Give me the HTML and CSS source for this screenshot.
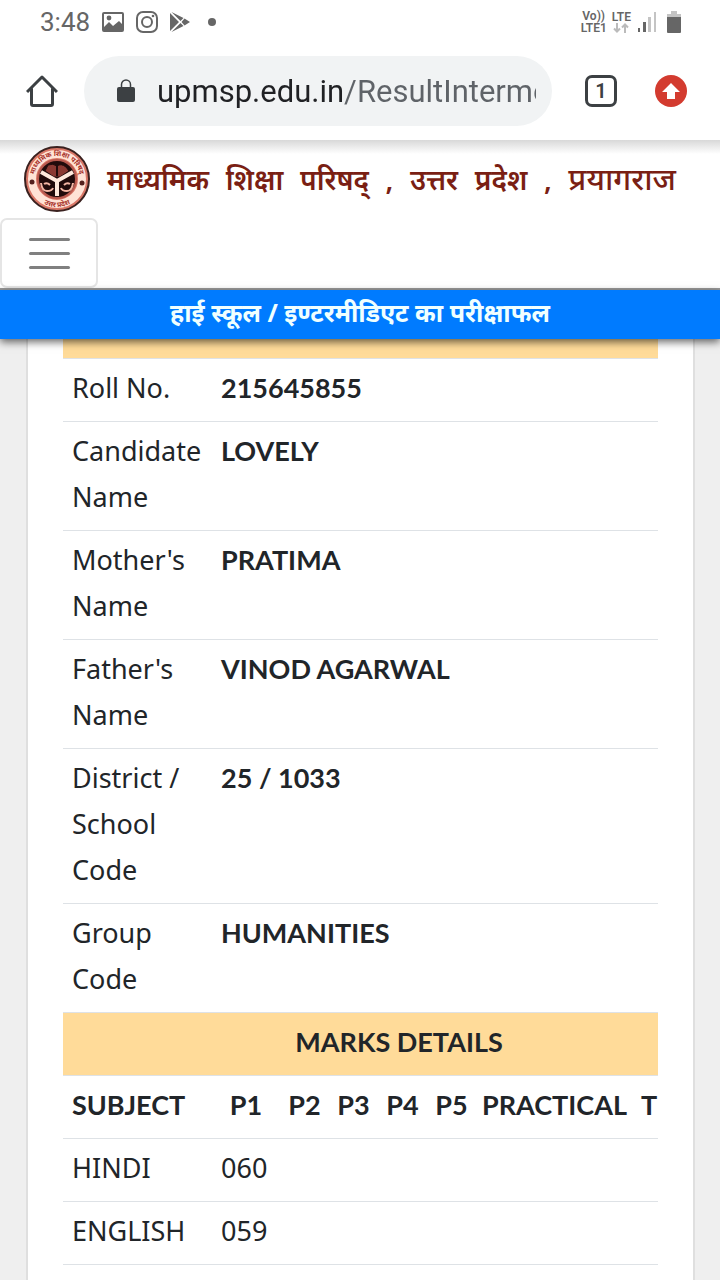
FILE: index.html
```
<!DOCTYPE html>
<html lang="hi">

<head>
    <meta charset="UTF-8">
    <meta name="viewport" content="width=device-width, initial-scale=1">
    <title>हाई स्कूल / इण्टरमीडिएट का परीक्षाफल</title>
    <link rel="stylesheet" href="styles.css">
</head>

<body>
    <div class="status">
        <span class="time">3:48</span>
        <svg class="photo" width="22" height="20" viewBox="0 0 22 20">
            <path fill="#666" fill-rule="evenodd" d="M2 0h18q2 0 2 2v16q0 2-2 2H2q-2 0-2-2V2q0-2 2-2zM2 2v13l5-5 4 4 6-5 3 3V2z" />
            <circle cx="7" cy="6" r="2.4" fill="#666" />
        </svg>
        <svg class="insta" width="22" height="22" viewBox="0 0 22 22" fill="none" stroke="#666" stroke-width="2">
            <rect x="1" y="1" width="20" height="20" rx="6" />
            <circle cx="11" cy="11" r="5" />
            <circle cx="17" cy="5" r="1.3" fill="#666" stroke="none" />
        </svg>
        <svg class="play" width="20" height="20" viewBox="0 0 20 20" fill="#666">
            <path d="M0 1l9 9-9 9zM1.500 0l12 6-3 3zM1.500 20l12-6-3-3zM14.500 6.500L20 10l-5.500 3.500L11.500 10z" />
        </svg>
        <span class="dot"></span>
        <div class="network">
            <div class="volte">Vo))<br>LTE1</div>
            <div class="lte">LTE
                <svg width="16" height="10" viewBox="0 0 16 10" fill="none" stroke="#bbb" stroke-width="2">
                    <path d="M4 0v9M1 5.500l3 3 3-3M12 10V1M9 4.500l3-3 3 3" />
                </svg>
            </div>
            <svg class="signal" width="18" height="20" viewBox="0 0 18 20">
                <path fill="#666" d="M0 16h2v4H0zM5 10h3v10H5z" />
                <path fill="#c4c4c4" d="M10 5h3v15h-3zM16 0h2v20h-2z" />
            </svg>
            <svg width="14" height="22" viewBox="0 0 14 22">
                <path fill="#c4c4c4" d="M4 0h6v3h4v4H0V3h4z" />
                <path fill="#666" d="M0 6h14v15q0 1-1 1H1q-1 0-1-1z" />
            </svg>
        </div>
    </div>

    <div class="toolbar">
        <button class="home" aria-label="Home">
            <svg width="32" height="32" viewBox="0 0 32 32" fill="none" stroke="#3c4043" stroke-width="3" stroke-linejoin="round">
                <path d="M1 17L16 2l15 15M5.500 13.500V29q0 1.500 1.500 1.500h18q1.500 0 1.500-1.500V13.500" />
            </svg>
        </button>
        <div class="address">
            <svg width="18" height="24" viewBox="0 0 18 24">
                <rect x="0" y="8" width="18" height="15" rx="2" fill="#3c4043" />
                <path d="M4.500 9V5.500a4.500 4.500 0 0 1 9 0V9" fill="none" stroke="#3c4043" stroke-width="1.500" />
            </svg>
            <input class="url" type="text" aria-label="URL" value="upmsp.edu.in/ResultIntermediate">
        </div>
        <button class="tabs">1</button>
        <button class="update" aria-label="Update">
            <svg width="32" height="32" viewBox="0 0 32 32">
                <circle cx="16" cy="16" r="16" fill="#d33b2f" />
                <path fill="#fff" d="M16 8l9 9h-5v7h-8v-7H7z" />
            </svg>
        </button>
    </div>

    <header class="site">
        <div class="brand">
            <svg class="logo" width="66" height="66" viewBox="0 0 66 66">
                <circle cx="33" cy="33" r="32" fill="#d97767" stroke="#3a211f" stroke-width="2" />
                <circle cx="33" cy="33" r="25" fill="none" stroke="#ffe3d6" stroke-width="8" />
                <!-- lettering round the rim -->
                <path id="rim-top" d="M10 33A23 23 0 0 1 56 33" fill="none" />
                <path id="rim-bottom" d="M5 33A28 28 0 0 0 61 33" fill="none" />
                <text class="rim"><textPath href="#rim-top" startOffset="50%">माध्यमिक शिक्षा परिषद्</textPath></text>
                <text class="rim"><textPath href="#rim-bottom" startOffset="50%">उत्तर प्रदेश</textPath></text>
                <circle cx="8" cy="36" r="2.500" fill="#54201d" />
                <circle cx="58" cy="37" r="2.500" fill="#54201d" />
                <circle cx="33" cy="33" r="19" fill="#210b0b" stroke="#b8594e" stroke-width="2" />
                <path d="M24 19q5-2 9 1 4-3 9 1l3 4-9 6h-6l-9-6z" fill="#8a3932" stroke="#210b0b" />
                <path d="M33 19v11" stroke="#210b0b" stroke-width="2" />
                <path d="M17 26l16 9 16-9M33 35v15" fill="none" stroke="#ffe9dc" stroke-width="4" />
                <path d="M17 37q1 8 6 8 5 0 6-3M49 37q-1 8-6 8-5 0-6-3M20 38q3-2 6 1M46 38q-3-2-6 1" fill="none" stroke="#f3b6a4" stroke-width="2" />
            </svg>
            <h1 class="name">
                <span>माध्यमिक</span> <span>शिक्षा</span> <span>परिषद्</span> <span>,</span>
                <span>उत्तर</span> <span>प्रदेश</span> <span>,</span> <span class="city">प्रयागराज</span>
            </h1>
        </div>
        <button class="menu" aria-label="Menu"><i></i><i></i><i></i></button>
    </header>
    <h2 class="title">हाई स्कूल / इण्टरमीडिएट का परीक्षाफल</h2>

    <main class="page">
        <div class="card">
            <div class="scroll">
                <table class="result">
                    <colgroup>
                        <col class="c-subject">
                        <col class="c-first">
                        <col class="c-paper" span="4">
                        <col class="c-practical">
                        <col class="c-total">
                    </colgroup>
                    <tbody>
                        <tr class="band top"><td colspan="8"></td></tr>
                        <tr><td>Roll No.</td><td colspan="7"><b>215645855</b></td></tr>
                        <tr><td>Candidate Name</td><td colspan="7"><b>LOVELY</b></td></tr>
                        <tr><td>Mother's Name</td><td colspan="7"><b>PRATIMA</b></td></tr>
                        <tr><td>Father's Name</td><td colspan="7"><b>VINOD AGARWAL</b></td></tr>
                        <tr><td>District / School Code</td><td colspan="7"><b>25 / 1033</b></td></tr>
                        <tr><td>Group Code</td><td colspan="7"><b>HUMANITIES</b></td></tr>
                        <tr class="band"><th colspan="8">MARKS DETAILS</th></tr>
                        <tr class="heads">
                            <th>SUBJECT</th>
                            <th>P1</th>
                            <th>P2</th>
                            <th>P3</th>
                            <th>P4</th>
                            <th>P5</th>
                            <th>PRACTICAL</th>
                            <th>T</th>
                        </tr>
                        <tr><td>HINDI</td><td>060</td><td colspan="6"></td></tr>
                        <tr><td>ENGLISH</td><td>059</td><td colspan="6"></td></tr>
                        <tr><td colspan="8"></td></tr>
                    </tbody>
                </table>
            </div>
        </div>
    </main>
</body>

</html>
```
FILE: styles.css
```
* {
    margin: 0;
    padding: 0;
    box-sizing: border-box;
}

body {
    height: 100vh;
    overflow: hidden;
    display: flex;
    flex-direction: column;
    background: #fff;
    color: #212529;
    font-family: "Noto Sans", "Liberation Sans", sans-serif;
}

button {
    border: 0;
    background: none;
    cursor: pointer;
}

svg {
    display: block;
    flex: none;
}

/* phone status bar */
.status {
    display: flex;
    align-items: center;
    flex: none;
    height: 43px;
    padding: 0 39px 0 40px;
    color: #666;
    font-family: Roboto, sans-serif;
}

.time {
    font-size: 26px;
    margin-right: 12px;
}

.photo,
.insta {
    margin-right: 12px;
}

.dot {
    width: 8px;
    height: 8px;
    margin-left: 18px;
    border-radius: 50%;
    background: #666;
}

.network {
    display: flex;
    align-items: center;
    margin-left: auto;
    font-size: 12px;
    font-weight: 600;
    line-height: 12px;
}

.volte {
    margin-right: 5px;
    text-align: center;
}

.lte {
    display: flex;
    flex-direction: column;
    align-items: center;
    margin-right: 7px;
}

.signal {
    margin-right: 11px;
}

/* browser toolbar */
.toolbar {
    display: flex;
    align-items: center;
    flex: none;
    height: 97px;
    padding: 0 33px 2px 26px;
}

.address {
    display: flex;
    align-items: center;
    flex: 1;
    min-width: 0;
    height: 70px;
    margin: 0 33px 0 26px;
    padding: 0 16px 0 33px;
    border-radius: 35px;
    background: #f1f3f4;
}

.url {
    flex: 1;
    min-width: 0;
    height: 44px;
    margin-left: 22px;
    padding-top: 2px;
    border: 0;
    outline: 0;
    font-family: Roboto, sans-serif;
    font-size: 31px;
    /* host dark, path grey */
    background: linear-gradient(90deg, #202124 186px, #5f6368 186px);
    -webkit-background-clip: text;
    background-clip: text;
    color: transparent;
}

.tabs {
    width: 32px;
    height: 32px;
    margin-right: 38px;
    border: 3px solid #3c4043;
    border-radius: 7px;
    color: #3c4043;
    font-family: Roboto, sans-serif;
    font-size: 20px;
    font-weight: 600;
    line-height: 26px;
}

/* site header */
.site {
    flex: none;
    height: 150px;
    padding-top: 6px;
    border-bottom: 2px solid #999;
    background: linear-gradient(#d8d8d8, #fff 14px);
}

.brand {
    display: flex;
    padding: 0 44px 0 24px;
}

.rim {
    fill: #a8322a;
    font-size: 7px;
    font-weight: 700;
    text-anchor: middle;
}

.name {
    display: flex;
    flex: 1;
    align-items: baseline;
    justify-content: space-between;
    margin-left: 17px;
    color: #7a1f14;
    font-size: 28px;
    font-weight: 600;
    line-height: 64px;
    white-space: nowrap;
}

.city {
    font-size: 31px;
    font-weight: 500;
}

.menu {
    display: flex;
    flex-direction: column;
    justify-content: center;
    align-items: center;
    gap: 11px;
    width: 98px;
    height: 70px;
    margin-top: 6px;
    border: 2px solid #e5e5e5;
    border-radius: 7px;
}

.brand {
    height: 66px;
}

.menu i {
    width: 41px;
    height: 3px;
    border-radius: 2px;
    background: #808080;
}

.title {
    position: relative;
    flex: none;
    height: 49px;
    background: #007bff;
    box-shadow: 0 3px 8px rgba(0, 0, 0, 0.6);
    color: #f0ffff;
    font-size: 25px;
    font-weight: 700;
    line-height: 44px;
    text-align: center;
}

/* result card */
.page {
    display: flex;
    flex: 1;
    min-height: 0;
    padding: 0 25px 0 26px;
    background: #efefef;
}

.card {
    flex: 1;
    min-width: 0;
    padding: 0 35px;
    border: solid #dfdfdf;
    border-width: 0 2px;
    background: #fff;
}

.scroll {
    overflow: hidden;
}

.result {
    width: 672px;
    table-layout: fixed;
    border-collapse: collapse;
    font-size: 27px;
    line-height: 46px;
}

.result td,
.result th {
    padding: 6px 0 10px 9px;
    border-top: 1px solid #dee2e6;
    text-align: left;
    vertical-align: top;
}

.result .band {
    background: #ffdb99;
}

.result .band th {
    padding-left: 0;
    text-align: center;
}

.result .top td {
    height: 19px;
    padding: 0;
    border: 0;
}

.result .heads th {
    padding-left: 0;
    text-align: center;
}

.result .heads th:first-child {
    padding-left: 9px;
    text-align: left;
}

.result .heads th:last-child {
    padding-left: 8px;
    text-align: left;
}

.c-subject {
    width: 149px;
}

.c-first {
    width: 68px;
}

.c-paper {
    width: 49px;
}

.c-practical {
    width: 157px;
}

.c-total {
    width: 102px;
}

.result b,
.result th {
    font-family: Lato, sans-serif;
    font-weight: 700;
}
```
